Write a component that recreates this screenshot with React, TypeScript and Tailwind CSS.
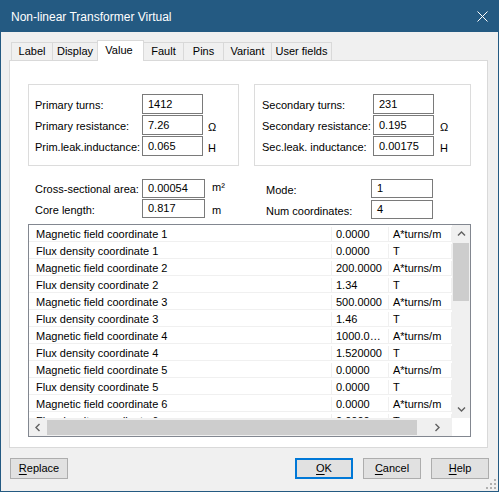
const rows: [string, string, string][] = [
  ['Magnetic field coordinate 1', '0.0000', 'A*turns/m'],
  ['Flux density coordinate 1', '0.0000', 'T'],
  ['Magnetic field coordinate 2', '200.0000', 'A*turns/m'],
  ['Flux density coordinate 2', '1.34', 'T'],
  ['Magnetic field coordinate 3', '500.0000', 'A*turns/m'],
  ['Flux density coordinate 3', '1.46', 'T'],
  ['Magnetic field coordinate 4', '1000.0…', 'A*turns/m'],
  ['Flux density coordinate 4', '1.520000', 'T'],
  ['Magnetic field coordinate 5', '0.0000', 'A*turns/m'],
  ['Flux density coordinate 5', '0.0000', 'T'],
  ['Magnetic field coordinate 6', '0.0000', 'A*turns/m'],
  ['Flux density coordinate 6', '0.0000', 'T'],
]

const tabs = [
  { name: 'Label', w: 'w-[42px]' },
  { name: 'Display', w: 'w-[46px]' },
  { name: 'Value', w: 'w-[47px]', active: true },
  { name: 'Fault', w: 'w-[41px]' },
  { name: 'Pins', w: 'w-[41px]' },
  { name: 'Variant', w: 'w-[49px]' },
  { name: 'User fields', w: 'w-[61px]' },
]

function Field({ value, w }: { value: string; w: string }) {
  return (
    <div className={`${w} h-full border border-[#7a7a7a] bg-white pl-[5px] flex items-center`}>
      {value}
    </div>
  )
}

function Chevron({ dir }: { dir: 'up' | 'down' | 'left' | 'right' }) {
  const d = {
    up: 'M1 5.5 L4.5 2 L8 5.5',
    down: 'M1 2.5 L4.5 6 L8 2.5',
    left: 'M5.5 1 L2 4.5 L5.5 8',
    right: 'M2.5 1 L6 4.5 L2.5 8',
  }[dir]
  return (
    <svg width="9" height="9" viewBox="0 0 9 9">
      <path d={d} fill="none" stroke="#606060" strokeWidth="1.4" />
    </svg>
  )
}

function Btn({ label, u, def }: { label: string; u: string; def?: boolean }) {
  const rest = label.slice(1)
  return (
    <div
      className={`w-[58px] h-[21px] flex items-center justify-center bg-[#e1e1e1] ${
        def ? 'border-2 border-[#0078d7]' : 'border border-[#adadad]'
      }`}
    >
      <span>
        <span className="underline underline-offset-2">{u}</span>
        {rest}
      </span>
    </div>
  )
}

export default function App() {
  return (
    <div className="relative w-[499px] h-[492px] border border-[#245a82] bg-[#f0f0f0] flex flex-col font-['Liberation_Sans',Arial,sans-serif] text-[11px] text-black overflow-hidden">
      {/* title bar */}
      <div className="h-[31px] shrink-0 bg-[#245a82] flex items-center pl-[10px] pr-[10px] text-white text-[12px]">
        <span className="flex-1">Non-linear Transformer Virtual</span>
        <svg width="11" height="11" viewBox="0 0 11 11" className="mb-[1px]">
          <path d="M0.5 0.5 L10.5 10.5 M10.5 0.5 L0.5 10.5" stroke="#fff" strokeWidth="1" />
        </svg>
      </div>

      {/* tabs */}
      <div className="mt-[8px] h-[20px] flex items-end pl-[10px]">
        {tabs.map((t, i) => (
          <div
            key={t.name}
            className={`${t.w} ${i > 0 ? '-ml-px' : ''} flex items-center justify-center border-l border-t border-r border-[#d9d9d9] ${
              t.active ? 'h-[21px] -mb-px bg-white relative z-10 pb-[2px] pr-[3px]' : 'h-[18px] bg-[#f0f0f0]'
            }`}
          >
            {t.name}
          </div>
        ))}
      </div>

      {/* panel */}
      <div className="ml-[8px] w-[479px] h-[388px] border border-[#d9d9d9] bg-white pl-[18px] pt-[23px] flex flex-col">
        <div className="flex gap-[15px]">
          <div className="w-[211px] h-[82px] border border-[#dcdcdc] pl-[6px] pt-[9px] flex flex-col gap-[1px]">
            {[
              ['Primary turns:', '1412', ''],
              ['Primary resistance:', '7.26', 'Ω'],
              ['Prim.leak.inductance:', '0.065', 'H'],
            ].map(([l, v, u]) => (
              <div key={l} className="h-[20px] flex items-center">
                <span className="w-[107px] pt-[3px]">{l}</span>
                <Field value={v} w="w-[61px]" />
                <span className="ml-[5px] pt-[5px]">{u}</span>
              </div>
            ))}
          </div>
          <div className="w-[217px] h-[82px] border border-[#dcdcdc] pl-[7px] pt-[9px] flex flex-col gap-[1px]">
            {[
              ['Secondary turns:', '231', ''],
              ['Secondary resistance:', '0.195', 'Ω'],
              ['Sec.leak. inductance:', '0.00175', 'H'],
            ].map(([l, v, u]) => (
              <div key={l} className="h-[20px] flex items-center">
                <span className="w-[111px] pt-[2px]">{l}</span>
                <Field value={v} w="w-[61px]" />
                <span className="ml-[6px] pt-[4px]">{u}</span>
              </div>
            ))}
          </div>
        </div>

        <div className="mt-[13px] h-[41px] flex">
          <div className="w-[226px] pl-[7px] flex flex-col gap-[1px]">
            {[
              ['Cross-sectional area:', '0.00054', 'm²'],
              ['Core length:', '0.817', 'm'],
            ].map(([l, v, u]) => (
              <div key={l} className="h-[19px] flex items-center">
                <span className={`w-[107px] ${u === 'm' ? 'pt-[4px]' : 'pt-[1px]'}`}>{l}</span>
                <Field value={v} w="w-[63px]" />
                <span className={`ml-[7px] ${u === 'm' ? 'pt-[4px]' : 'pb-[3px]'}`}>{u}</span>
              </div>
            ))}
          </div>
          <div className="pl-[12px] flex flex-col gap-[2px]">
            {[
              ['Mode:', '1'],
              ['Num coordinates:', '4'],
            ].map(([l, v]) => (
              <div key={l} className="h-[19px] flex items-center">
                <span className="w-[105px] pt-[4px]">{l}</span>
                <Field value={v} w="w-[62px]" />
              </div>
            ))}
          </div>
        </div>

        {/* table */}
        <div className="mt-[4px] w-[443px] h-[213px] border border-[#828790] flex flex-col">
          <div className="h-[193px] flex">
            <div className="w-[423px] h-full overflow-hidden">
              {rows.map(([a, b, c]) => (
                <div key={a} className="h-[17px] flex border-b border-[#f0f0f0] pt-[2px]">
                  <div className="w-[303px] pl-[7px] border-r border-[#f0f0f0] flex items-center">{a}</div>
                  <div className="w-[57px] pl-[4px] border-r border-[#f0f0f0] flex items-center whitespace-nowrap">{b}</div>
                  <div className="w-[63px] pl-[4px] border-r border-[#f0f0f0] flex items-center whitespace-nowrap">{c}</div>
                </div>
              ))}
            </div>
            <div className="w-[18px] h-full bg-[#f0f0f0] flex flex-col">
              <div className="h-[18px] flex items-center justify-center">
                <Chevron dir="up" />
              </div>
              <div className="h-[58px] mx-[1px] bg-[#cdcdcd]" />
              <div className="flex-1" />
              <div className="h-[17px] flex items-center justify-center">
                <Chevron dir="down" />
              </div>
            </div>
          </div>
          <div className="h-[18px] flex">
            <div className="w-[423px] h-full bg-[#f0f0f0] flex items-center">
              <div className="w-[18px] flex items-center justify-center">
                <Chevron dir="left" />
              </div>
              <div className="w-[370px] h-[15px] bg-[#cdcdcd]" />
              <div className="flex-1 flex items-center justify-center pl-[6px]">
                <Chevron dir="right" />
              </div>
            </div>
            <div className="w-[18px] h-full bg-white" />
          </div>
        </div>
      </div>

      {/* buttons */}
      <div className="mt-[10px] px-[9px] flex">
        <Btn label="Replace" u="R" />
        <div className="ml-auto flex gap-[10px]">
          <Btn label="OK" u="O" def />
          <Btn label="Cancel" u="C" />
          <Btn label="Help" u="H" />
        </div>
      </div>

      {/* size grip */}
      <svg width="11" height="11" viewBox="0 0 11 11" className="absolute right-[1px] bottom-[1px]">
        {[
          [8, 0],
          [8, 4],
          [4, 4],
          [8, 8],
          [4, 8],
          [0, 8],
        ].map(([x, y]) => (
          <rect key={`${x}-${y}`} x={x} y={y} width="2" height="2" fill="#b0b0b0" />
        ))}
      </svg>
    </div>
  )
}
